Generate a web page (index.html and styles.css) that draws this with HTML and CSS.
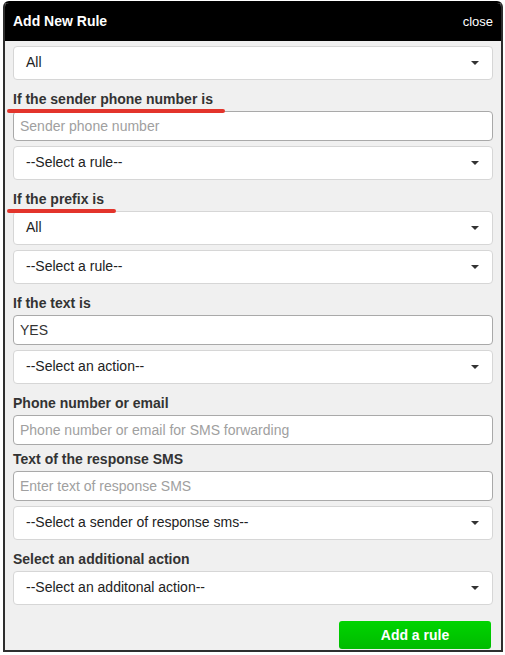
FILE: index.html
```html
<!DOCTYPE html>
<html lang="en">

<head>
  <meta charset="UTF-8">
  <meta name="viewport" content="width=device-width, initial-scale=1.0">
  <title>Add New Rule</title>
  <link rel="stylesheet" href="styles.css">
</head>

<body>
  <div class="dialog">
    <div class="dialog-head">
      <span class="dialog-title">Add New Rule</span>
      <span class="dialog-close">close</span>
    </div>

    <form action="#" class="dialog-body" id="ruleForm">
      <div class="group">
        <div class="select"><span>All</span><i class="caret"></i></div>
      </div>

      <div class="group">
        <label class="field-label"><span class="mark">If the sender phone number is</span></label>
        <input class="input" type="text" placeholder="Sender phone number">
        <div class="select"><span>--Select a rule--</span><i class="caret"></i></div>
      </div>

      <div class="group">
        <label class="field-label"><span class="mark">If the prefix is</span></label>
        <div class="select"><span>All</span><i class="caret"></i></div>
        <div class="select"><span>--Select a rule--</span><i class="caret"></i></div>
      </div>

      <div class="group">
        <label class="field-label">If the text is</label>
        <input class="input" type="text" value="YES">
        <div class="select"><span>--Select an action--</span><i class="caret"></i></div>
      </div>

      <div class="group">
        <label class="field-label">Phone number or email</label>
        <input class="input" type="text" placeholder="Phone number or email for SMS forwarding">
        <label class="field-label">Text of the response SMS</label>
        <input class="input" type="text" placeholder="Enter text of response SMS">
        <div class="select"><span>--Select a sender of response sms--</span><i class="caret"></i></div>
      </div>

      <div class="group">
        <label class="field-label">Select an additional action</label>
        <div class="select"><span>--Select an additonal action--</span><i class="caret"></i></div>
      </div>

      <div class="actions">
        <button class="btn-add" type="submit">Add a rule</button>
      </div>
    </form>
  </div>
</body>

</html>
```

FILE: styles.css
```css
* {
  box-sizing: border-box;
}

body {
  margin: 0;
  background: #fff;
  font-family: "Liberation Sans", Arial, sans-serif;
  font-size: 14px;
  color: #333;
}

.dialog {
  width: 500px;
  margin: 1px 0 0 3px;
  border: 2px solid #2e2e2e;
  border-top-color: #000;
  border-radius: 6px 6px 0 0;
  background: #f0f0f0;
  overflow: hidden;
}

.dialog-head {
  display: flex;
  justify-content: space-between;
  align-items: baseline;
  height: 38px;
  padding: 8px 8px 0 8px;
  line-height: 20px;
  background: #000;
  color: #fff;
}

.dialog-title {
  font-weight: bold;
  font-size: 14px;
}

.dialog-close {
  font-size: 13px;
}

.dialog-body {
  display: flex;
  flex-direction: column;
  padding: 0 8px 1px 8px;
}

.group {
  display: flex;
  flex-direction: column;
  margin-top: 5px;
}

.group + .group {
  margin-top: 10px;
}

.group > * + * {
  margin-top: 5px;
}

.group > .field-label {
  margin-top: 5px;
}

.group > .field-label:first-child {
  margin-top: 0;
}

.field-label + * {
  margin-top: 0 !important;
}

.field-label {
  display: block;
  font-weight: bold;
  line-height: 18px;
  height: 21px;
}

.mark {
  position: relative;
}

.mark::after {
  content: "";
  position: absolute;
  left: -6px;
  right: -12px;
  top: 18px;
  height: 4px;
  border-radius: 2px;
  background: #e3342b;
}

.select {
  display: flex;
  align-items: center;
  justify-content: space-between;
  height: 34px;
  padding: 0 13px 3px 12px;
  background: #fff;
  border: 1px solid #d6d6d6;
  border-radius: 4px;
  color: #222;
}

.caret {
  width: 0;
  height: 0;
  margin-top: 3px;
  border-left: 4px solid transparent;
  border-right: 4px solid transparent;
  border-top: 4px solid #333;
}

.input {
  display: block;
  width: 100%;
  height: 30px;
  padding: 0 6px;
  font-family: "Liberation Sans", Arial, sans-serif;
  font-size: 14px;
  color: #333;
  background: #fff;
  border: 1px solid #a9a9a9;
  border-radius: 4px;
  outline: none;
}

.input::placeholder {
  color: #a0a0a0;
}

.actions {
  display: flex;
  justify-content: flex-end;
  margin-top: 16px;
  padding-right: 2px;
}

.btn-add {
  width: 152px;
  height: 28px;
  border: 0;
  border-radius: 3px;
  background: linear-gradient(#00d400, #00bb00);
  color: #fff;
  font-family: "Liberation Sans", Arial, sans-serif;
  font-size: 14px;
  font-weight: bold;
  cursor: pointer;
}
```
